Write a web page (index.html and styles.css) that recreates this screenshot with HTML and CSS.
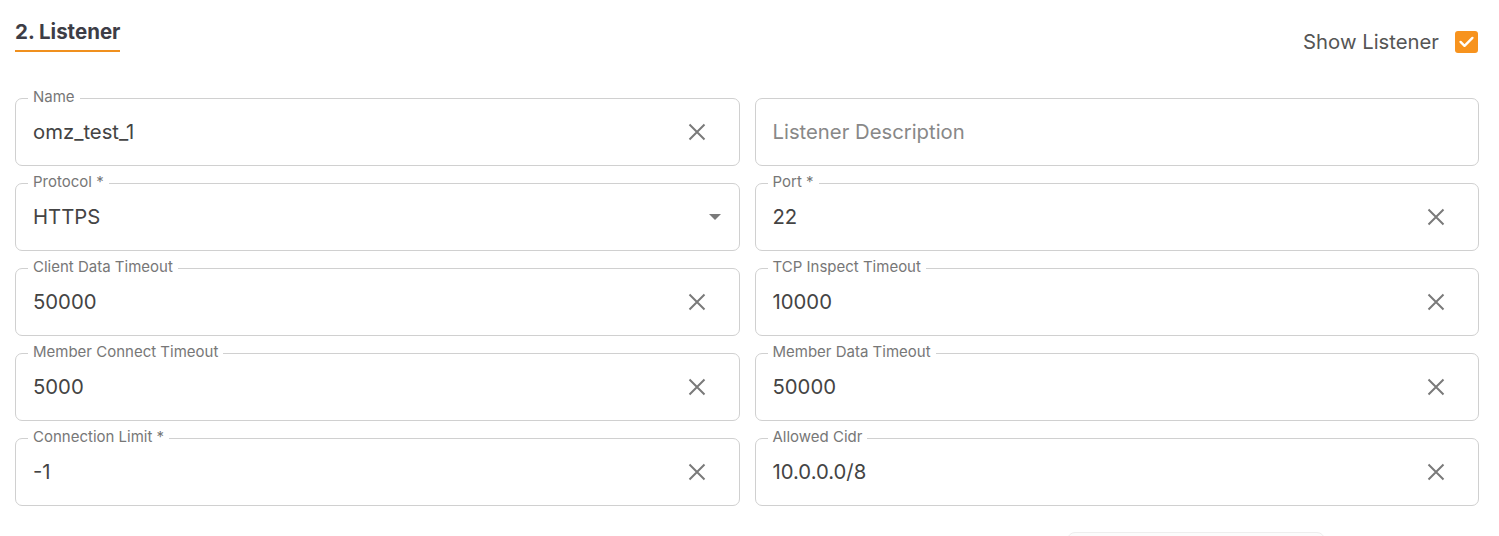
FILE: index.html
```html
<!DOCTYPE html>
<html lang="en">
<head>
<meta charset="utf-8">
<title>Listener</title>
<link rel="stylesheet" href="styles.css">
</head>
<body>
<section class="panel">
  <header class="head">
    <h2 class="title">2. Listener</h2>
    <label class="toggle">
      <span>Show Listener</span>
      <span class="check">
        <svg viewBox="0 0 24 24" width="19" height="19"><path d="M4.5 12.5l5 5 10-10" fill="none" stroke="#fff" stroke-width="3" stroke-linecap="round" stroke-linejoin="round"/></svg>
      </span>
    </label>
  </header>

  <div class="grid">
    <div class="field">
      <span class="label">Name</span>
      <span class="value">omz_test_1</span>
      <span class="clear"><svg viewBox="0 0 18 18" width="18" height="18"><path d="M1.5 1.5l15 15M16.5 1.5l-15 15" stroke="currentColor" stroke-width="2" fill="none"/></svg></span>
    </div>
    <div class="field">
      <span class="value placeholder">Listener Description</span>
    </div>

    <div class="field">
      <span class="label">Protocol *</span>
      <span class="value">HTTPS</span>
      <span class="caret"></span>
    </div>
    <div class="field">
      <span class="label">Port *</span>
      <span class="value">22</span>
      <span class="clear"><svg viewBox="0 0 18 18" width="18" height="18"><path d="M1.5 1.5l15 15M16.5 1.5l-15 15" stroke="currentColor" stroke-width="2" fill="none"/></svg></span>
    </div>

    <div class="field">
      <span class="label">Client Data Timeout</span>
      <span class="value">50000</span>
      <span class="clear"><svg viewBox="0 0 18 18" width="18" height="18"><path d="M1.5 1.5l15 15M16.5 1.5l-15 15" stroke="currentColor" stroke-width="2" fill="none"/></svg></span>
    </div>
    <div class="field">
      <span class="label">TCP Inspect Timeout</span>
      <span class="value">10000</span>
      <span class="clear"><svg viewBox="0 0 18 18" width="18" height="18"><path d="M1.5 1.5l15 15M16.5 1.5l-15 15" stroke="currentColor" stroke-width="2" fill="none"/></svg></span>
    </div>

    <div class="field">
      <span class="label">Member Connect Timeout</span>
      <span class="value">5000</span>
      <span class="clear"><svg viewBox="0 0 18 18" width="18" height="18"><path d="M1.5 1.5l15 15M16.5 1.5l-15 15" stroke="currentColor" stroke-width="2" fill="none"/></svg></span>
    </div>
    <div class="field">
      <span class="label">Member Data Timeout</span>
      <span class="value">50000</span>
      <span class="clear"><svg viewBox="0 0 18 18" width="18" height="18"><path d="M1.5 1.5l15 15M16.5 1.5l-15 15" stroke="currentColor" stroke-width="2" fill="none"/></svg></span>
    </div>

    <div class="field">
      <span class="label">Connection Limit *</span>
      <span class="value">-1</span>
      <span class="clear"><svg viewBox="0 0 18 18" width="18" height="18"><path d="M1.5 1.5l15 15M16.5 1.5l-15 15" stroke="currentColor" stroke-width="2" fill="none"/></svg></span>
    </div>
    <div class="field">
      <span class="label">Allowed Cidr</span>
      <span class="value">10.0.0.0/8</span>
      <span class="clear"><svg viewBox="0 0 18 18" width="18" height="18"><path d="M1.5 1.5l15 15M16.5 1.5l-15 15" stroke="currentColor" stroke-width="2" fill="none"/></svg></span>
    </div>
  </div>

  <div class="foot">
    <div class="ghost-btn"></div>
  </div>
</section>
</body>
</html>
```

FILE: styles.css
```css
* { box-sizing: border-box; }
html, body { margin: 0; padding: 0; background: #fff; }
body {
  font-family: Inter, "Noto Sans", sans-serif;
  color: #444;
  overflow: hidden;
}
.panel {
  padding: 0 20px 0 15px;
  height: 536px;
  overflow: hidden;
}
.head {
  display: flex;
  justify-content: space-between;
  align-items: flex-start;
  height: 98px;
}
.title {
  margin: 20px 0 0 0;
  font-size: 20.5px;
  font-weight: 700;
  color: #3d3d46;
  line-height: 24px;
  padding-bottom: 6px;
  border-bottom: 2px solid #f0901e;
}
.toggle {
  margin-top: 29px;
  display: flex;
  align-items: center;
  gap: 16px;
  font-size: 20.3px;
  color: #555;
  margin-right: 1px;
}
.check {
  width: 23px;
  height: 22px;
  border-radius: 3px;
  background: #f7931e;
  display: flex;
  align-items: center;
  justify-content: center;
}
.grid {
  display: grid;
  grid-template-columns: 1fr 1fr;
  column-gap: 15px;
  row-gap: 17px;
}
.field {
  position: relative;
  height: 68px;
  border: 1px solid #d0d0d0;
  border-radius: 7px;
  display: flex;
  align-items: center;
  padding: 0 17px;
}
.label {
  position: absolute;
  top: -11px;
  left: 12px;
  padding: 0 5px;
  background: #fff;
  font-size: 15px;
  line-height: 17px;
  color: #777;
}
.value {
  flex: 1;
  font-size: 20.3px;
  color: #444;
  margin-top: -2px;
}
.placeholder { color: #888; }
.clear {
  width: 18px;
  height: 18px;
  margin-right: 16px;
  color: #7a7a7a;
  display: flex;
}
.caret {
  width: 0;
  height: 0;
  border-left: 6px solid transparent;
  border-right: 6px solid transparent;
  border-top: 6px solid #7a7a7a;
  margin-right: 1px;
}
.foot {
  display: flex;
  padding-left: 1052px;
  padding-top: 26px;
}
.ghost-btn {
  width: 258px;
  height: 40px;
  border: 1px solid #eee;
  border-radius: 8px;
  background: #fcfcfc;
}
```
